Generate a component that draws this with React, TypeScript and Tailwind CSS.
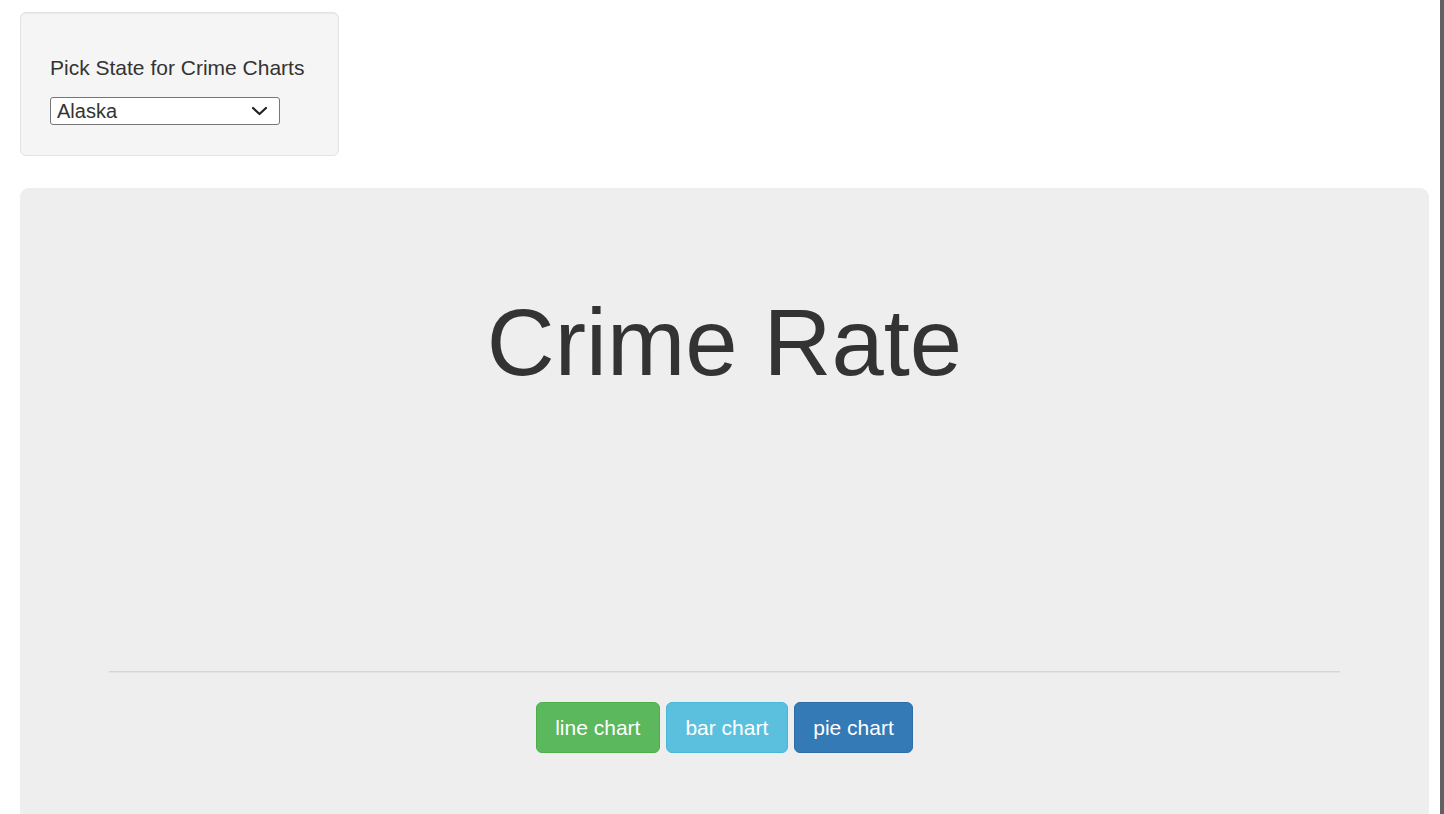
import React, { useState } from 'react';

const STATES = ['Alabama', 'Alaska', 'Arizona', 'Arkansas', 'California', 'Colorado'];

const App = () => {
  const [state, setState] = useState('Alaska');

  return (
    <div
      className="flex h-screen w-full overflow-hidden bg-white text-[#333333]"
      style={{ fontFamily: '"Liberation Sans", Arial, sans-serif' }}
    >
      <div className="flex-1 pl-5 pr-[11px] pt-3">
        {/* SIDEBAR WELL */}
        <div className="w-[319px] rounded-[6px] border border-[#e3e3e3] bg-[#f5f5f5] px-[29px] pt-[40px] pb-[30px] shadow-[inset_0_1px_1px_rgba(0,0,0,0.05)]">
          <label className="block text-[21px] leading-[30px]">Pick State for Crime Charts</label>
          <div className="relative mt-[14px] h-[28px] w-[230px]">
            <select
              value={state}
              onChange={(e) => setState(e.target.value)}
              className="h-full w-full appearance-none rounded-[3px] border border-[#767676] bg-white pl-[6px] text-[20px] leading-[26px] text-[#333333] outline-none"
            >
              {STATES.map((s) => (
                <option key={s} value={s}>{s}</option>
              ))}
            </select>
            <svg
              className="pointer-events-none absolute right-[12px] top-[9px] h-[10px] w-[17px]"
              viewBox="0 0 17 10"
              fill="none"
              stroke="#222222"
              strokeWidth="2.2"
              strokeLinecap="round"
              strokeLinejoin="round"
            >
              <path d="M2 2l6.5 6 6.5-6" />
            </svg>
          </div>
        </div>

        {/* JUMBOTRON */}
        <div className="mt-8 h-[700px] rounded-[9px] bg-[#eeeeee] px-[89px] pt-[103px]">
          <h1 className="text-center text-[94px] font-normal leading-[104px] text-[#333333]">Crime Rate</h1>
          <div className="h-[276px]" />
          <div className="h-px bg-[#d5d5d5]" />
          <div className="h-px bg-[#e3e3e3]" />
          <div className="mt-[29px] flex justify-center gap-[6px]">
            <button className="h-[51px] rounded-[6px] border border-[#4cae4c] bg-[#5cb85c] px-[18.5px] text-[21px] text-white">
              line chart
            </button>
            <button className="h-[51px] rounded-[6px] border border-[#46b8da] bg-[#5bc0de] px-[18.5px] text-[21px] text-white">
              bar chart
            </button>
            <button className="h-[51px] rounded-[6px] border border-[#2e6da4] bg-[#337ab7] px-[18.5px] text-[21px] text-white">
              pie chart
            </button>
          </div>
        </div>
      </div>
      {/* right edge strip */}
      <div className="w-1 shrink-0 bg-[#616161]" />
    </div>
  );
};

export default App;
